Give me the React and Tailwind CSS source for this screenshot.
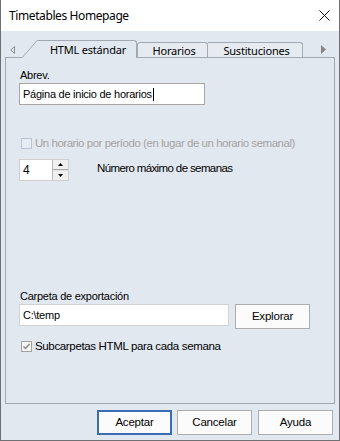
import React from "react";

const BODY = "#e2e8f0";

function Checkbox({ checked, disabled }) {
  return (
    <div
      className={
        "w-[11px] h-[11px] border flex items-center justify-center shrink-0 " +
        (disabled ? "border-[#b8c4d4] bg-[#e8edf3]" : "border-[#a3a3a3] bg-[#f4f4f4]")
      }
    >
      {checked && (
        <svg width="9" height="9" viewBox="0 0 9 9">
          <path d="M1.5 4.5 L3.5 6.5 L7.5 2" fill="none" stroke="#8a8a8a" strokeWidth="1.4" />
        </svg>
      )}
    </div>
  );
}

function Btn({ children, primary, className = "" }) {
  return (
    <div
      className={
        "h-[25px] w-[75px] flex items-center justify-center bg-[#fbfbfb] text-[11.5px] tracking-[-0.2px] text-black " +
        (primary ? "border border-[#3a6cb4] shadow-[inset_0_0_0_1px_#3a6cb4]" : "border border-[#adadad]") +
        " " +
        className
      }
    >
      {children}
    </div>
  );
}

export default function App() {
  return (
    <div
      className="w-[340px] h-[441px] flex flex-col border-x border-b border-[#6e7074] bg-[#e2e8f0] overflow-hidden"
      style={{ fontFamily: '"Liberation Sans", Arial, sans-serif' }}
    >
      {/* Title bar */}
      <div className="h-[31px] shrink-0 bg-white flex items-center justify-between pl-[8px] pr-[9px]">
        <span
          className="text-[12px] tracking-[-0.4px] text-black"
          style={{ fontFamily: '"Noto Sans", "Liberation Sans", sans-serif' }}
        >
          Timetables Homepage
        </span>
        <svg width="11" height="11" viewBox="0 0 11 11">
          <path d="M0.5 0.5 L10.5 10.5 M10.5 0.5 L0.5 10.5" stroke="#111" strokeWidth="1" />
        </svg>
      </div>

      {/* Tab strip */}
      <div
        className="mt-[9px] h-[17px] shrink-0 flex items-end text-[11px] tracking-[-0.2px] text-black"
        style={{ fontFamily: '"Noto Sans", "Liberation Sans", sans-serif' }}
      >
        <div className="self-center ml-[9px] mt-[2px] flex">
          <svg width="5" height="8" viewBox="0 0 5 8">
            <path d="M4.5 0.5 L0.8 4 L4.5 7.5 Z" fill="none" stroke="#8d8d8d" strokeWidth="1" />
          </svg>
        </div>
        {/* selected tab */}
        <div className="ml-[7px] relative z-10 -mb-px flex items-end">
          <svg width="15" height="18" viewBox="0 0 15 18" className="block">
            <path d="M0 18 L15 0 L15 18 Z" fill={BODY} />
            <path d="M0.3 17.6 L15 0.5" fill="none" stroke="#a3a9b1" strokeWidth="1" />
          </svg>
          <div className="h-[18px] w-[100px] bg-[#e2e8f0] border-t border-r border-[#a3a9b1] rounded-tr-[3px] flex items-center justify-center pl-[3px] pb-[1px] leading-none">
            HTML estándar
          </div>
        </div>
        <div className="h-[15px] w-[71px] bg-[#e6ebf1] border-t border-x border-[#a3a9b1] rounded-t-[3px] flex items-center justify-center pl-[3px] leading-none">
          Horarios
        </div>
        <div className="h-[15px] w-[95px] bg-[#e6ebf1] border-t border-r border-[#a3a9b1] rounded-tr-[3px] flex items-center justify-center pl-[3px] leading-none">
          Sustituciones
        </div>
        <div className="self-center ml-[18px] mt-[2px] flex">
          <svg width="5" height="9" viewBox="0 0 5 9">
            <path d="M0 0 L5 4.5 L0 9 Z" fill="#858585" />
          </svg>
        </div>
      </div>

      {/* Panel */}
      <div className="mx-[4px] h-[347px] shrink-0 border border-[#a3a9b1] flex flex-col pl-[13px] pt-[11px] text-[11px] tracking-[-0.25px] text-black">
        <div className="h-[13px] leading-[13px] pl-[1px]">Abrev.</div>
        <div className="mt-px h-[22px] w-[186px] bg-white border border-[#a6a6a6] flex items-center pl-[3px]">
          <span>Página de inicio de horarios</span>
          <span className="w-px h-[13px] bg-black ml-[1px]" />
        </div>

        <div className="mt-[32px] h-[13px] flex items-center">
          <div className="ml-[2px]">
            <Checkbox disabled />
          </div>
          <span className="ml-[3px] text-[#a3a3a3] text-[11.5px] tracking-[-0.47px]">
            Un horario por período (en lugar de un horario semanal)
          </span>
        </div>

        <div className="mt-[9px] h-[22px] flex items-center">
          <div className="h-[22px] w-[50px] flex border border-[#cfcfcf] bg-white">
            <div className="flex-1 flex items-center pl-[3px] text-[12px]">4</div>
            <div className="w-[16px] flex flex-col border-l border-[#b8b8b8]">
              <div className="h-[10px] bg-[#f0f0f0] border-b border-[#a6a6a6] flex items-center justify-center">
                <svg width="5" height="3" viewBox="0 0 5 3">
                  <path d="M2.5 0 L5 3 L0 3 Z" fill="#000" />
                </svg>
              </div>
              <div className="flex-1 bg-[#f0f0f0] border-t border-[#e6e6e6] flex items-center justify-center">
                <svg width="5" height="3" viewBox="0 0 5 3">
                  <path d="M0 0 L5 0 L2.5 3 Z" fill="#000" />
                </svg>
              </div>
            </div>
          </div>
          <span className="ml-[28px] text-[11.5px] tracking-[-0.62px] -mt-[2px]">Número máximo de semanas</span>
        </div>

        <div className="mt-[109px] h-[13px] leading-[13px] pl-[1px]">Carpeta de exportación</div>
        <div className="mt-px flex gap-[6px]">
          <div className="h-[22px] w-[210px] bg-white border border-[#d2d2d2] flex items-center pl-[3px]">
            C:\temp
          </div>
          <Btn className="h-[23px]">Explorar</Btn>
        </div>

        <div className="mt-[11px] h-[13px] flex items-center">
          <div className="ml-[2px]">
            <Checkbox checked />
          </div>
          <span className="ml-[3px] text-[11.5px] tracking-[-0.35px]">Subcarpetas HTML para cada semana</span>
        </div>
      </div>

      {/* Buttons */}
      <div className="mt-[6px] flex justify-end pr-[6px]">
        <Btn primary>Aceptar</Btn>
        <Btn className="ml-[5px]">Cancelar</Btn>
        <Btn className="ml-[6px]">Ayuda</Btn>
      </div>
    </div>
  );
}
